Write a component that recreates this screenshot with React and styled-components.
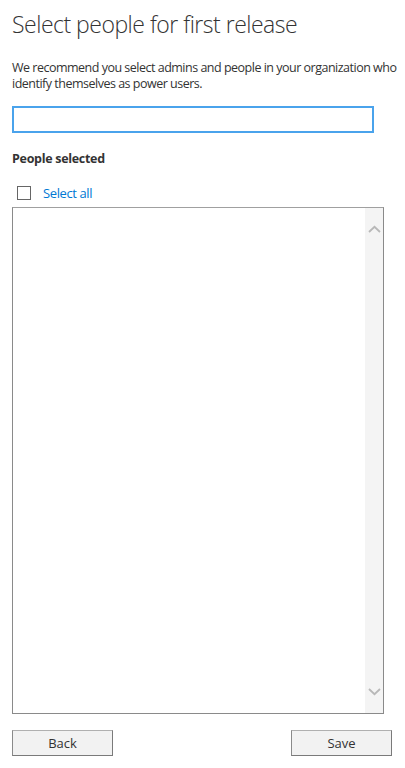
import styled, { createGlobalStyle } from "styled-components";

const GlobalStyle = createGlobalStyle`
  html, body {
    margin: 0;
    padding: 0;
    background: #fff;
  }
  body {
    font-family: "Open Sans", "Liberation Sans", sans-serif;
    color: #252525;
  }
`;

const Page = styled.div`
  width: 405px;
  height: 768px;
  box-sizing: border-box;
  padding: 8px 12px 0 12px;
  display: flex;
  flex-direction: column;
`;

const Title = styled.h1`
  margin: 0;
  font-size: 23px;
  font-weight: 300;
  line-height: 32px;
  color: #333;
  letter-spacing: -0.5px;
`;

const Intro = styled.p`
  margin: 20px 0 0;
  font-size: 12.5px;
  line-height: 16px;
  color: #333;
  letter-spacing: -0.5px;
  white-space: nowrap;
`;

const SearchInput = styled.input`
  box-sizing: border-box;
  width: 362px;
  height: 27px;
  margin-top: 14px;
  border: 2px solid #4aa3ec;
  padding: 0 6px;
  outline: none;
  background: #fff;
`;

const SectionLabel = styled.div`
  margin-top: 17px;
  font-size: 12.5px;
  font-weight: 700;
  color: #333;
  line-height: 18px;
  letter-spacing: -0.3px;
`;

const SelectRow = styled.label`
  display: flex;
  align-items: center;
  gap: 12px;
  margin-top: 16px;
  padding-left: 5px;
  height: 18px;
`;

const Box = styled.span`
  box-sizing: border-box;
  width: 14px;
  height: 14px;
  border: 1px solid #666;
  background: #fff;
`;

const LinkText = styled.span`
  font-size: 13px;
  color: #0078d4;
  letter-spacing: -0.4px;
`;

const ListBox = styled.div`
  box-sizing: border-box;
  width: 372px;
  height: 507px;
  margin-top: 5px;
  border: 1px solid #8a8a8a;
  border-top-color: #a0a0a0;
  display: flex;
  justify-content: flex-end;
`;

const ScrollTrack = styled.div`
  width: 18px;
  background: #f4f4f4;
  display: flex;
  flex-direction: column;
  justify-content: space-between;
  align-items: center;
  padding: 17px 0 17px;
`;

const Footer = styled.div`
  display: flex;
  justify-content: space-between;
  margin-top: 16px;
  width: 380px;
`;

const Button = styled.button`
  box-sizing: border-box;
  width: 101px;
  height: 26px;
  border: 1px solid #7a7a7a;
  border-top-color: #b0b0b0;
  border-left-color: #8a8a8a;
  background: #f2f2f2;
  font-family: "Open Sans", "Liberation Sans", sans-serif;
  font-size: 13px;
  color: #333;
  padding: 0;
`;

const Chevron = ({ up }) => (
  <svg width="13" height="8" viewBox="0 0 13 8">
    <path
      d={up ? "M1 7 L6.5 1.8 L12 7" : "M1 1 L6.5 6.2 L12 1"}
      fill="none"
      stroke="#b8b8b8"
      strokeWidth="1.8"
    />
  </svg>
);

export default function App() {
  return (
    <>
      <GlobalStyle />
      <Page>
        <Title>Select people for first release</Title>
        <Intro>
          We recommend you select admins and people in your organization who
          <br />
          identify themselves as power users.
        </Intro>
        <SearchInput type="text" />
        <SectionLabel>People selected</SectionLabel>
        <SelectRow>
          <Box />
          <LinkText>Select all</LinkText>
        </SelectRow>
        <ListBox>
          <ScrollTrack>
            <Chevron up />
            <Chevron />
          </ScrollTrack>
        </ListBox>
        <Footer>
          <Button>Back</Button>
          <Button>Save</Button>
        </Footer>
      </Page>
    </>
  );
}
